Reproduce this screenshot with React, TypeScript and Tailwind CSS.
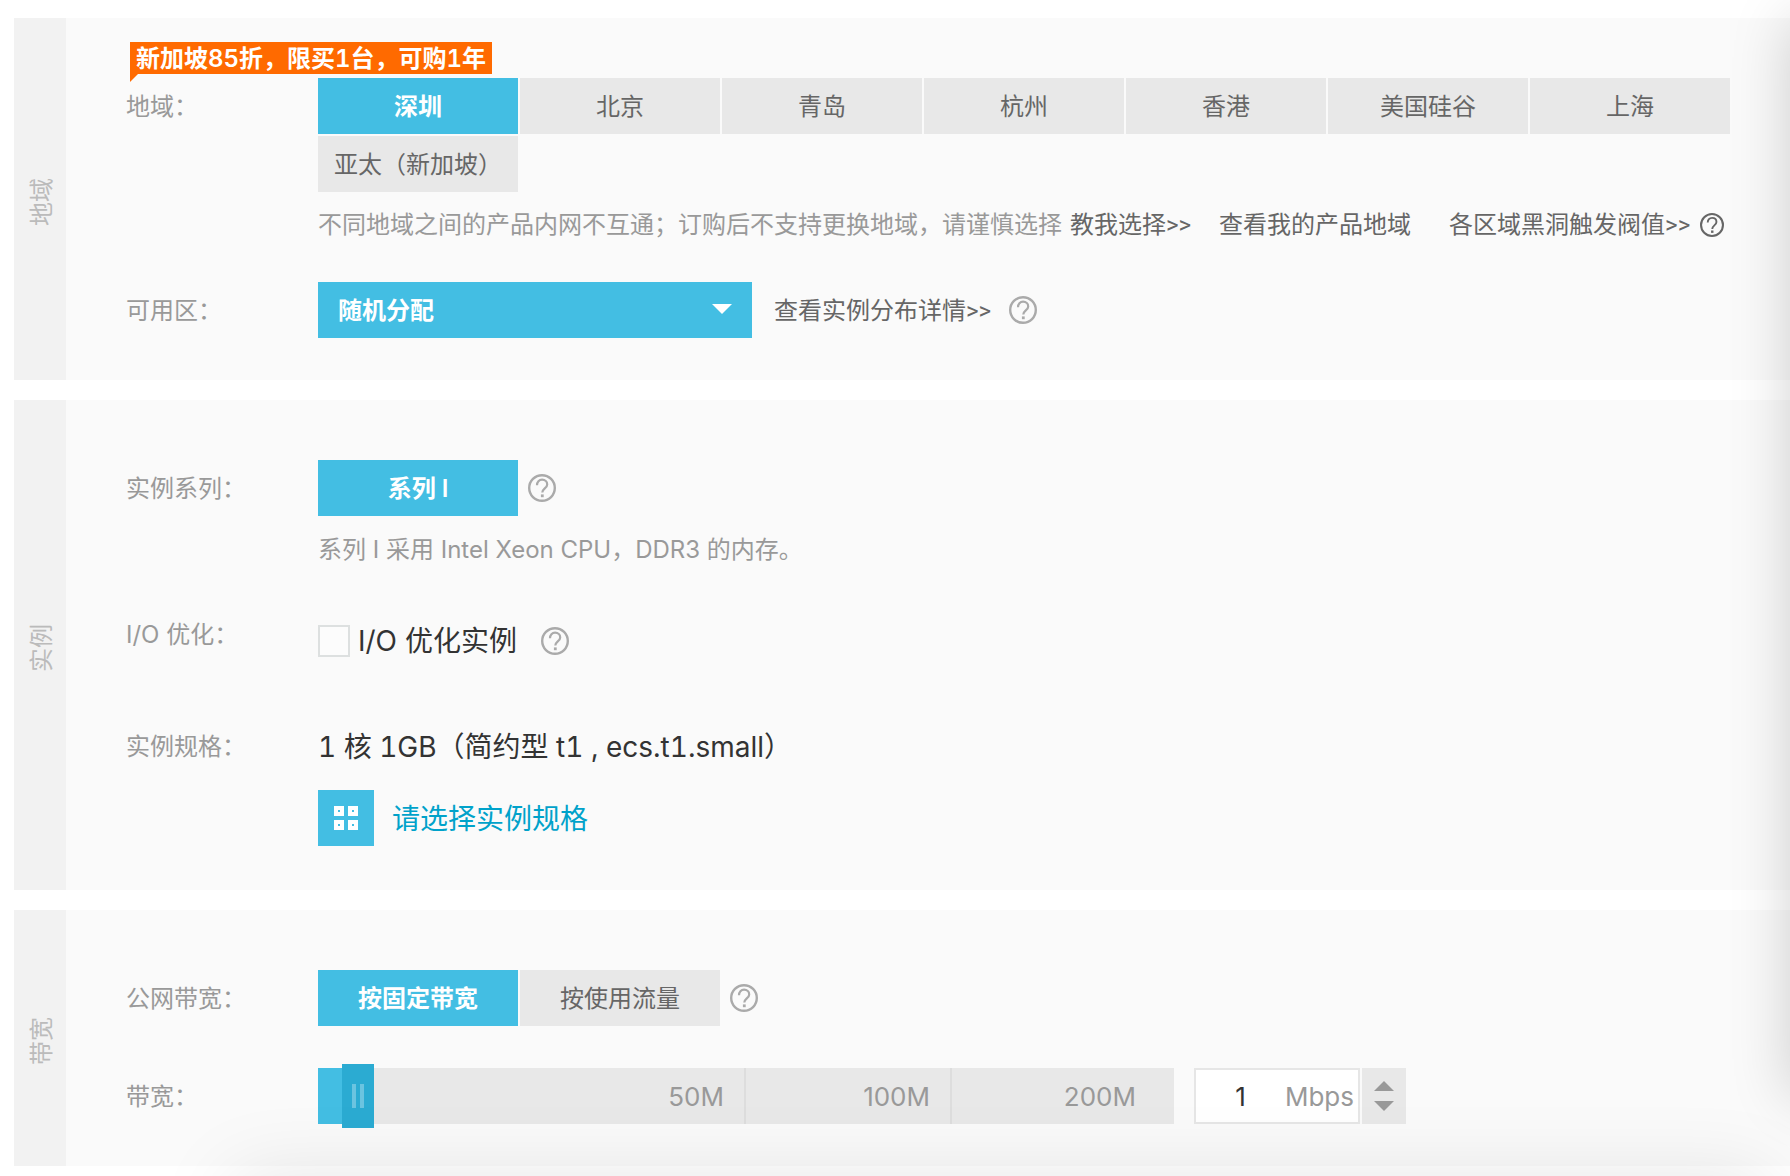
import { useState } from "react";
import type { ReactNode } from "react";
import { clsx } from "clsx";

const regions = [
  "深圳",
  "北京",
  "青岛",
  "杭州",
  "香港",
  "美国硅谷",
  "上海",
  "亚太（新加坡）",
];

const billingModes = ["按固定带宽", "按使用流量"];

function HelpIcon({ className }: { className?: string }) {
  return (
    <button type="button" aria-label="帮助" className={clsx("shrink-0", className)}>
      <svg viewBox="0 0 28 28" fill="none" stroke="currentColor" className="size-full">
        <circle cx="14" cy="14" r="12.8" strokeWidth="2.4" />
        <path
          d="M9 11.2c0-3.4 2.1-5.5 5.1-5.5s5.1 1.9 5.1 4.7c0 3.8-4.9 4.3-4.9 8.2"
          strokeWidth="2.2"
        />
        <path d="M14.3 20.4v2.8" strokeWidth="2.8" />
      </svg>
    </button>
  );
}

function Section({ title, className, children }: {
  title: string;
  className?: string;
  children: ReactNode;
}) {
  return (
    <section className="flex bg-[#fafafa]">
      <h2 className="flex w-13 shrink-0 items-center justify-center bg-[#f2f2f2] pt-1.5 pl-1 text-[#bbb]">
        <span className="-rotate-90 whitespace-nowrap">{title}</span>
      </h2>
      <div className={clsx("flex min-w-0 flex-1 flex-col pr-15 pl-15", className)}>
        {children}
      </div>
    </section>
  );
}

function Row({ label, htmlFor, children }: {
  label: string;
  htmlFor?: string;
  children: ReactNode;
}) {
  return (
    <div className="flex items-start">
      {htmlFor ? (
        <label htmlFor={htmlFor} className="h-14 w-48 shrink-0 leading-[58px] text-[#999]">
          {label}
        </label>
      ) : (
        <span className="h-14 w-48 shrink-0 leading-[58px] text-[#999]">{label}</span>
      )}
      <div className="min-w-0 flex-1">{children}</div>
    </div>
  );
}

function Option({ selected, onClick, children }: {
  selected: boolean;
  onClick?: () => void;
  children: ReactNode;
}) {
  return (
    <button
      type="button"
      aria-pressed={selected}
      onClick={onClick}
      className={clsx(
        "h-14 w-50 pt-[2px] whitespace-nowrap",
        selected ? "bg-[#43bee3] font-semibold text-white" : "bg-[#e8e8e8] text-[#666]",
      )}
    >
      {children}
    </button>
  );
}

function TextLink({ href, className, children }: {
  href: string;
  className?: string;
  children: ReactNode;
}) {
  return (
    <a
      href={href}
      className={clsx("font-[Roboto,'Noto_Sans_CJK_SC',sans-serif] text-[#666]", className)}
    >
      {children}
    </a>
  );
}

export default function App() {
  const [region, setRegion] = useState("深圳");
  const [billing, setBilling] = useState("按固定带宽");
  const [bandwidth, setBandwidth] = useState(1);

  const changeBandwidth = (value: number) => {
    setBandwidth(Math.min(200, Math.max(1, value || 1)));
  };

  return (
    <div className="relative min-h-screen overflow-hidden bg-white font-[Inter,'Noto_Sans_CJK_SC',sans-serif] text-2xl leading-9">
      <main className="flex flex-col gap-5 pt-[18px] pb-[10px] pl-[14px]">
        <Section title="地域" className="gap-[38px] pt-15 pb-[42px]">
          <div className="relative">
            <div className="absolute bottom-full left-1 mb-1 h-8 bg-[#ff6a00] px-[6px] leading-[34px] font-semibold whitespace-nowrap text-white tabular-nums">
              新加坡85折，限买1台，可购1年
              <svg viewBox="0 0 8 8" className="absolute top-full left-0 size-2" fill="#ff6a00">
                <path d="M0 0h8L0 8z" />
              </svg>
            </div>
            <Row label="地域：">
              <div className="flex flex-wrap gap-[2px]">
                {regions.map((name) => (
                  <Option key={name} selected={name === region} onClick={() => setRegion(name)}>
                    {name}
                  </Option>
                ))}
              </div>
              <div className="mt-3.5 flex items-center leading-[38px] whitespace-nowrap text-[#666]">
                <span className="mr-2 text-[#999]">
                  不同地域之间的产品内网不互通；订购后不支持更换地域，请谨慎选择
                </span>
                <TextLink href="#guide" className="mr-7">教我选择&gt;&gt;</TextLink>
                <TextLink href="#mine" className="mr-[38px]">查看我的产品地域</TextLink>
                <TextLink href="#blackhole" className="mr-[10px]">各区域黑洞触发阀值&gt;&gt;</TextLink>
                <HelpIcon className="size-6" />
              </div>
            </Row>
          </div>
          <Row label="可用区：" htmlFor="zone">
            <div className="flex items-center">
              <div className="relative w-[434px]">
                <select
                  id="zone"
                  className="h-14 w-full appearance-none bg-[#43bee3] px-5 pt-[2px] font-semibold text-white"
                >
                  <option>随机分配</option>
                </select>
                <svg
                  viewBox="0 0 20 10"
                  className="pointer-events-none absolute top-[22px] right-5 h-[10px] w-5"
                  fill="#fff"
                >
                  <path d="M0 0h20L10 10z" />
                </svg>
              </div>
              <TextLink href="#detail" className="ml-[22px] pt-[2px]">查看实例分布详情&gt;&gt;</TextLink>
              <HelpIcon className="ml-[18px] size-7 text-[#aaa]" />
            </div>
          </Row>
        </Section>

        <Section title="实例" className="pt-15 pb-11">
          <Row label="实例系列：">
            <div className="flex items-center gap-[10px]">
              <Option selected>系列 I</Option>
              <HelpIcon className="size-7 text-[#aaa]" />
            </div>
            <p className="mt-4 text-[#999]">系列 I 采用 Intel Xeon CPU，DDR3 的内存。</p>
          </Row>
          <div className="mt-[38px]">
            <Row label="I/O 优化：">
              <div className="flex h-[70px] items-center text-[28px] text-[#333]">
                <input
                  id="io"
                  type="checkbox"
                  className="size-8 appearance-none border-2 border-[#dde0e0] bg-[#fcfcfc] checked:bg-[#43bee3]"
                />
                <label htmlFor="io" className="ml-2">I/O 优化实例</label>
                <HelpIcon className="ml-6 size-7 text-[#aaa]" />
              </div>
            </Row>
          </div>
          <div className="mt-[42px]">
            <Row label="实例规格：">
              <p className="text-[28px] leading-[58px] text-[#333] tabular-nums">
                1 核 1GB（简约型 t1 , ecs.t1.small）
              </p>
              <button type="button" className="mt-3.5 flex items-center gap-[18px] text-[28px] text-[#00a2ca]">
                <span className="flex size-14 items-center justify-center bg-[#43bee3]">
                  <svg viewBox="0 0 24 24" className="size-6" fill="none" stroke="#fff" strokeWidth="4">
                    <path d="M2 2h6v6H2zM16 2h6v6h-6zM2 16h6v6H2zM16 16h6v6h-6z" />
                  </svg>
                </span>
                <span className="pt-[2px]">请选择实例规格</span>
              </button>
            </Row>
          </div>
        </Section>

        <Section title="带宽" className="gap-[42px] pt-15 pb-[42px]">
          <Row label="公网带宽：">
            <div className="flex items-center gap-[2px]">
              {billingModes.map((mode) => (
                <Option key={mode} selected={mode === billing} onClick={() => setBilling(mode)}>
                  {mode}
                </Option>
              ))}
              <HelpIcon className="ml-2 size-7 text-[#aaa]" />
            </div>
          </Row>
          <Row label="带宽：" htmlFor="bandwidth">
            <div className="flex items-center text-[26px]">
              <div className="relative flex h-14 w-[856px] bg-[#e8e8e8] text-[#999]">
                <span className="flex w-[428px] items-center justify-end border-r-2 border-[#ddd] pt-[2px] pr-5">
                  50M
                </span>
                <span className="flex w-[206px] items-center justify-end border-r-2 border-[#ddd] pt-[2px] pr-5">
                  100M
                </span>
                <span className="flex flex-1 items-center justify-end pt-[2px] pr-[38px]">200M</span>
                <input
                  id="bandwidth"
                  type="range"
                  min="1"
                  max="200"
                  value={bandwidth}
                  onChange={(e) => changeBandwidth(Number(e.target.value))}
                  className="absolute inset-0 size-full cursor-pointer opacity-0"
                />
                <div className="pointer-events-none absolute inset-y-0 left-0 w-6 bg-[#43bee3]" />
                <div className="pointer-events-none absolute -inset-y-1 left-6 flex w-8 items-center justify-center gap-1 bg-[#2babd2]">
                  <i className="h-6 w-1 bg-[#6bc4e0]" />
                  <i className="h-6 w-1 bg-[#6bc4e0]" />
                </div>
              </div>
              <div className="ml-5 flex h-14 w-[166px] items-center border-2 border-[#e6e6e6] bg-white pt-[2px] pr-1">
                <input
                  type="text"
                  aria-label="带宽值"
                  value={bandwidth}
                  onChange={(e) => changeBandwidth(Number(e.target.value))}
                  className="w-0 flex-1 text-center text-[#333]"
                />
                <span className="text-[#999]">Mbps</span>
              </div>
              <div className="ml-[2px] flex h-14 w-11 flex-col items-center justify-center gap-[10px] bg-[#e8e8e8]">
                <button type="button" aria-label="增加" onClick={() => changeBandwidth(bandwidth + 1)}>
                  <svg viewBox="0 0 20 10" className="h-[10px] w-5" fill="#999">
                    <path d="M0 10h20L10 0z" />
                  </svg>
                </button>
                <button type="button" aria-label="减少" onClick={() => changeBandwidth(bandwidth - 1)}>
                  <svg viewBox="0 0 20 10" className="h-[10px] w-5" fill="#999">
                    <path d="M0 0h20L10 10z" />
                  </svg>
                </button>
              </div>
            </div>
          </Row>
        </Section>
      </main>

      {/* soft shadows cast in from the right and bottom edges */}
      <div className="pointer-events-none absolute top-5 bottom-20 left-full w-40 shadow-[0_0_60px_rgba(0,0,0,0.18)]" />
      <div className="pointer-events-none absolute top-full right-5 left-58 h-40 shadow-[0_0_80px_rgba(0,0,0,0.1)]" />
    </div>
  );
}
